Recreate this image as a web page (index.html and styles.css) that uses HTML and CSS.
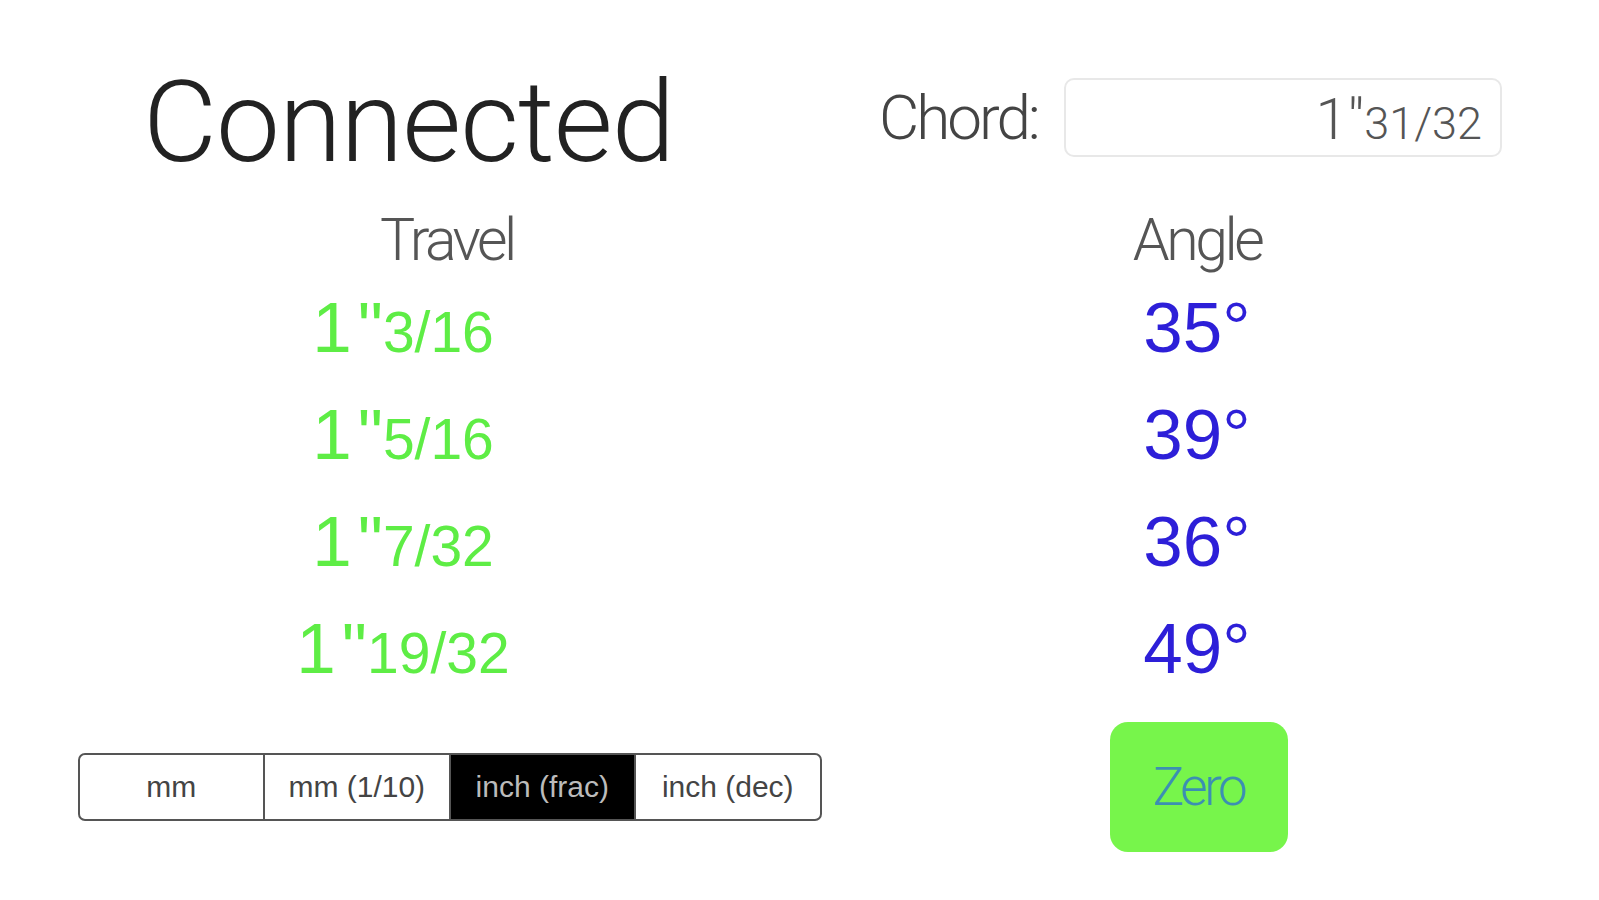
FILE: index.html
```html
<!DOCTYPE html>
<html lang="en">
<head>
    <meta charset="UTF-8">
    <title>Chord Meter</title>
    <link rel="stylesheet" href="styles.css">
</head>
<body>
<div class="page">
    <div class="col left">
        <div class="status">Connected</div>
        <div class="heading travel-head">Travel</div>
        <div class="values travel">
            <div class="value"><span class="whole">1</span>"<span class="frac">3/16</span></div>
            <div class="value"><span class="whole">1</span>"<span class="frac">5/16</span></div>
            <div class="value"><span class="whole">1</span>"<span class="frac">7/32</span></div>
            <div class="value"><span class="whole">1</span>"<span class="frac">19/32</span></div>
        </div>
        <div class="bottom">
            <div class="segmented">
                <div class="seg">mm</div>
                <div class="seg">mm (1/10)</div>
                <div class="seg active">inch (frac)</div>
                <div class="seg">inch (dec)</div>
            </div>
        </div>
    </div>
    <div class="col right">
        <div class="chord-row">
            <span class="chord-label">Chord:</span>
            <div class="chord-box">1"<span class="frac">31/32</span></div>
        </div>
        <div class="heading">Angle</div>
        <div class="values angle">
            <div class="value">35°</div>
            <div class="value">39°</div>
            <div class="value">36°</div>
            <div class="value">49°</div>
        </div>
        <div class="bottom">
            <button class="zero-btn">Zero</button>
        </div>
    </div>
</div>
</body>
</html>
```

FILE: styles.css
```css
body {
    margin: 0;
    background: #fff;
    font-family: "Liberation Sans", Arial, sans-serif;
}
.page {
    display: grid;
    grid-template-columns: 750px 750px;
    padding-left: 72px;
}
.col {
    display: flex;
    flex-direction: column;
}
.status {
    height: 190px;
    padding-top: 65px;
    padding-left: 71px;
    box-sizing: border-box;
    font-family: Roboto, "Liberation Sans", sans-serif;
    font-weight: 300;
    font-size: 114px;
    line-height: 114px;
    letter-spacing: -1px;
    color: #222;
}
.chord-row {
    height: 190px;
    padding-top: 78px;
    box-sizing: border-box;
    display: flex;
    align-items: flex-start;
}
.chord-label {
    width: 242px;
    padding-left: 57px;
    box-sizing: border-box;
    font-family: Roboto, "Liberation Sans", sans-serif;
    font-weight: 300;
    font-size: 62px;
    line-height: 79px;
    letter-spacing: -3px;
    color: #444;
}
.chord-box {
    width: 438px;
    height: 79px;
    box-sizing: border-box;
    border: 2px solid #e8e8e8;
    border-radius: 10px;
    text-align: right;
    padding-right: 18px;
    font-family: Roboto, "Liberation Sans", sans-serif;
    font-weight: 300;
    font-size: 58px;
    line-height: 79px;
    color: #555;
}
.chord-box .frac {
    font-size: 45px;
}
.heading {
    height: 84px;
    padding-top: 16px;
    box-sizing: border-box;
    text-align: center;
    font-family: Roboto, "Liberation Sans", sans-serif;
    font-weight: 300;
    font-size: 59px;
    line-height: 68px;
    letter-spacing: -3.5px;
    color: #555;
}
.values {
    display: flex;
    flex-direction: column;
}
.travel {
    padding-right: 88px;
    color: #5eed45;
}
.angle {
    color: #2d1fd8;
}
.value {
    height: 107px;
    text-align: center;
    font-size: 71px;
    line-height: 107px;
}
.value .whole {
    margin-right: 6px;
}
.value .frac {
    font-size: 57px;
}
.bottom {
    height: 170px;
    display: flex;
    align-items: center;
    justify-content: center;
}
.segmented {
    display: flex;
    width: 744px;
    height: 68px;
    margin-left: 5px;
    box-sizing: border-box;
    border: 2px solid #555;
    border-radius: 7px;
    overflow: hidden;
}
.seg {
    flex: 1;
    text-align: center;
    font-size: 30px;
    line-height: 64px;
    color: #444;
    border-left: 2px solid #555;
}
.seg:first-child {
    border-left: none;
}
.seg.active {
    background: #000;
    color: #bbb;
}
.zero-btn {
    width: 178px;
    height: 130px;
    border: none;
    border-radius: 18px;
    background: #77f54b;
    color: #3c8fb2;
    font-family: Roboto, "Liberation Sans", sans-serif;
    font-weight: 300;
    font-size: 53px;
    letter-spacing: -3.5px;
    margin-left: 3px;
}
```
